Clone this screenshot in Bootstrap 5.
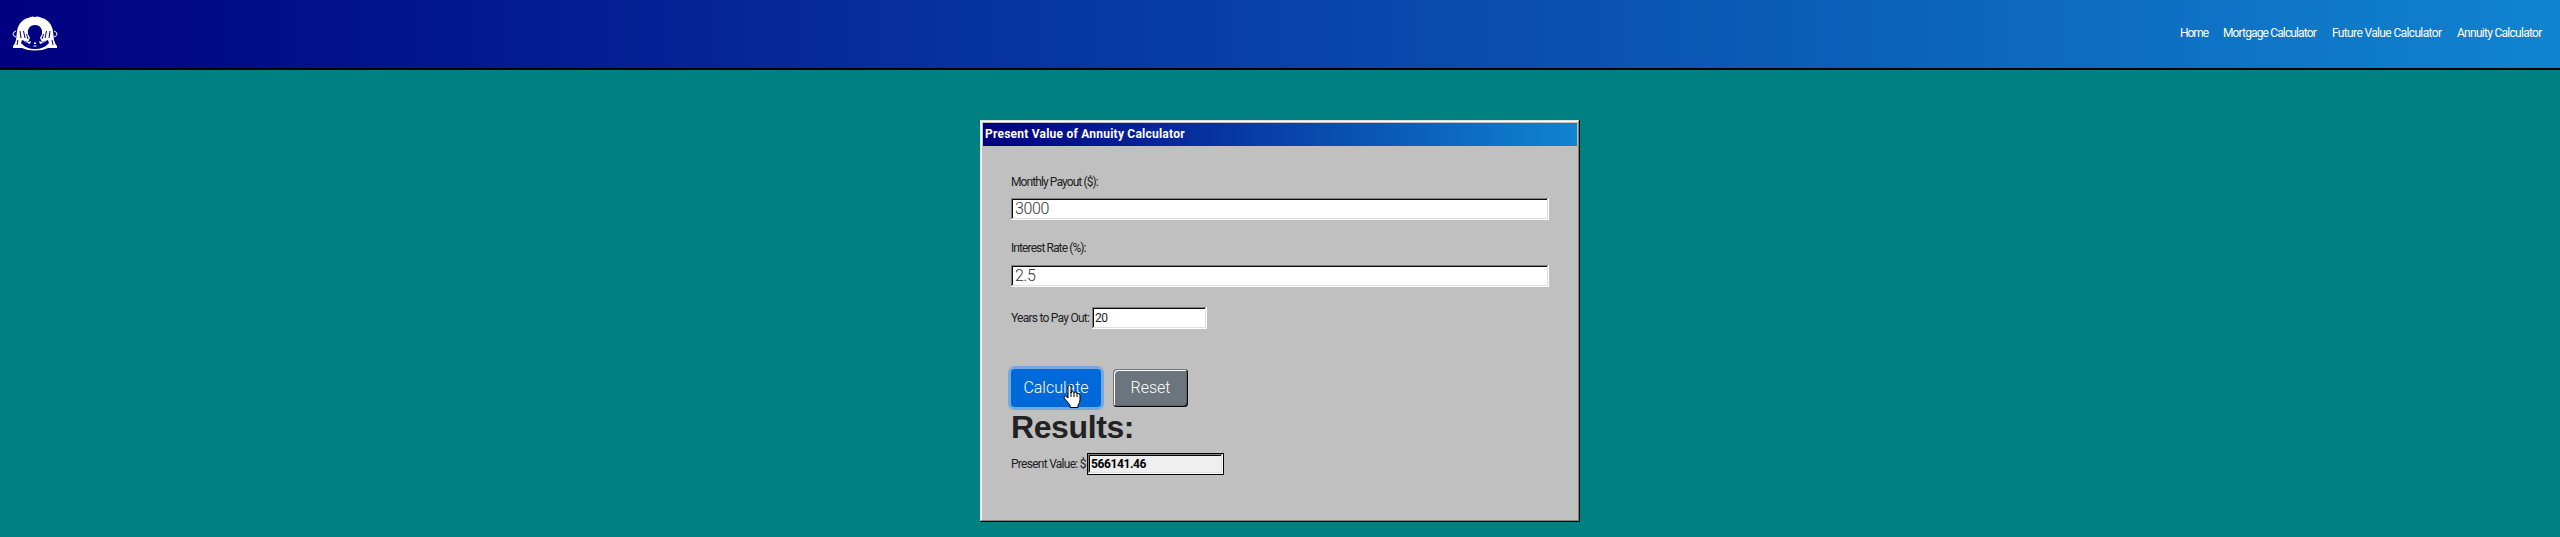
<!DOCTYPE html>
<html lang="en">
<head>
<meta charset="utf-8">
<meta name="viewport" content="width=device-width, initial-scale=1">
<title>Present Value of Annuity Calculator</title>
<link href="https://cdn.jsdelivr.net/npm/bootstrap@5.3.0/dist/css/bootstrap.min.css" rel="stylesheet">
<style>
body{background:teal;font:12px/16px Roboto,"Liberation Sans",sans-serif;color:#222;height:537px;overflow:hidden}
.topbar{height:70px;padding:0 18px 0 12px;border-bottom:2px solid #000;background:linear-gradient(90deg,navy,#1084d0)}
.topbar .nav{margin-top:-2px}
.topbar .nav-link{color:#fff;padding:0;font-size:12px;line-height:16px;white-space:nowrap}
.w-home{width:43px;letter-spacing:-1.1px}.w-mort{width:109px;letter-spacing:-.86px}.w-fut{width:125px;letter-spacing:-.64px}.w-ann{width:85px;letter-spacing:-.72px}
.win{width:600px;height:402px;margin:50px auto 0;padding:3px;background:silver;box-shadow:inset -1px -1px #0a0a0a,inset 1px 1px #dfdfdf,inset -2px -2px gray,inset 2px 2px #fff}
.titlebar{height:23px;padding:0 2px 2px;background:linear-gradient(90deg,navy,#1084d0);color:#fff;font-weight:700;font-size:12px;letter-spacing:.23px}
.win-body{padding:28px 28px 0}
.lbl{display:block;height:16px;letter-spacing:-.9px;white-space:nowrap}
.field{height:22px;padding:0 4px;border:0;border-radius:0;background:#fff;color:#333;font:300 16px/22px Roboto,sans-serif;box-shadow:inset -1px -1px #fff,inset 1px 1px gray,inset -2px -2px #dfdfdf,inset 2px 2px #0a0a0a;letter-spacing:-.4px;outline:0}
.field-sm{width:115px;padding-left:3px;font-size:12px;font-weight:400;color:#222}
.field-out{width:137px;padding-left:3px;background:#efefef;color:#000;font-size:12px;font-weight:700;border:1px solid #000;line-height:20px;letter-spacing:-.4px}
.btn-w{height:38px;padding:0;border:0;font:300 16px/38px Roboto,sans-serif;color:#fff;border-radius:4px}
.btn-calc,.btn-calc:hover{width:90px;background:#0069d9;color:#fff;box-shadow:0 0 0 3px rgba(38,143,255,.5)}
.btn-reset,.btn-reset:hover{width:75px;background:#6c757d;color:#fff;box-shadow:inset -1px -1px #0a0a0a,inset 1px 1px #6c757d,inset -2px -2px #5a6268,inset 2px 2px #fff}
.results{font:700 32px/38px "Liberation Sans",Arial,sans-serif;color:#222;margin:1px 0 0;letter-spacing:-.4px}
.pointer{left:52px;top:15px}
</style>
</head>
<body>
<nav class="topbar d-flex align-items-center justify-content-between">
  <svg width="46" height="36" viewBox="0 0 46 36" aria-label="Logo">
    <path fill="#fff" d="M5 15C6 8 11 3 16 2Q20-.5 23 1Q26-.5 30 2C35 3 40 8 41 15L42 24Q43 28 45 30V32H36Q31 34.500 23 34.500T10 32H1V30Q3 28 4 24Z"/>
    <path fill="#000080" d="M16 18C15 12 19 9 23 9S31 12 30 18L28 22L30 26L36 24L37 27Q32 33 23 33Q14 33 9 27L10 24L16 26L18 22Z"/>
    <path fill="none" stroke="#000080" d="M8 15L9 22M11.500 15L13 22M14.500 18L16 23M38 15L37 22M34.500 15L33 22M31.500 18L30 23M6 24L5 29M40 24L41 29"/>
    <path fill="#fff" d="M11 24L15 26.500L19 25L18 28L13 26ZM35 24L31 26.500L27 25L28 28L33 26ZM22 26.500h2v1.500h-2zM21.500 29.500h3v1h-3z"/>
    <path fill="none" stroke="#fff" d="M4 15Q1 16 1 18T4 21M42 15Q45 16 45 18T42 21"/>
  </svg>
  <div class="nav flex-nowrap">
    <a class="nav-link w-home" href="#">Home</a>
    <a class="nav-link w-mort" href="#">Mortgage Calculator</a>
    <a class="nav-link w-fut" href="#">Future Value Calculator</a>
    <a class="nav-link w-ann" href="#">Annuity Calculator</a>
  </div>
</nav>
<main class="win">
  <div class="titlebar d-flex align-items-center">Present Value of Annuity Calculator</div>
  <form class="win-body">
    <label class="lbl" for="pay">Monthly Payout ($):</label>
    <input class="field d-block w-100" id="pay" value="3000" style="margin-top:8px">
    <label class="lbl" for="rate" style="margin-top:20px">Interest Rate (%):</label>
    <input class="field d-block w-100" id="rate" value="2.5" style="margin-top:9px">
    <div class="d-flex align-items-center" style="margin-top:20px">
      <label class="lbl" for="years" style="width:81px;letter-spacing:-.75px">Years to Pay Out:</label>
      <input class="field field-sm" id="years" value="20">
    </div>
    <div class="d-flex" style="margin-top:40px;gap:12px">
      <button type="button" class="btn btn-w btn-calc position-relative">Calculate
        <svg class="pointer position-absolute" width="18" height="25" viewBox="0 0 18 25"><path d="M5 14V3Q5 1 6.500 1T8 3V9Q8 7.500 9.500 7.500T11 9Q11 8 12.300 8T14 10Q14 9.500 15.200 9.500T17 11V16Q17 19 15 21V23.500H7V21L1 14Q1 12 2.500 12Z" fill="#fff" stroke="#000"/><path d="M8 8v5M11 9v4M14 10v3" stroke="#000" fill="none"/></svg>
      </button>
      <button type="button" class="btn btn-w btn-reset">Reset</button>
    </div>
    <h2 class="results">Results:</h2>
    <div class="d-flex align-items-center" style="margin-top:7px">
      <label class="lbl" for="out" style="width:76px;letter-spacing:-.73px">Present Value: $</label>
      <input class="field field-out" id="out" value="566141.46" readonly>
    </div>
  </form>
</main>
<script src="https://cdn.jsdelivr.net/npm/bootstrap@5.3.0/dist/js/bootstrap.bundle.min.js"></script>
</body>
</html>
